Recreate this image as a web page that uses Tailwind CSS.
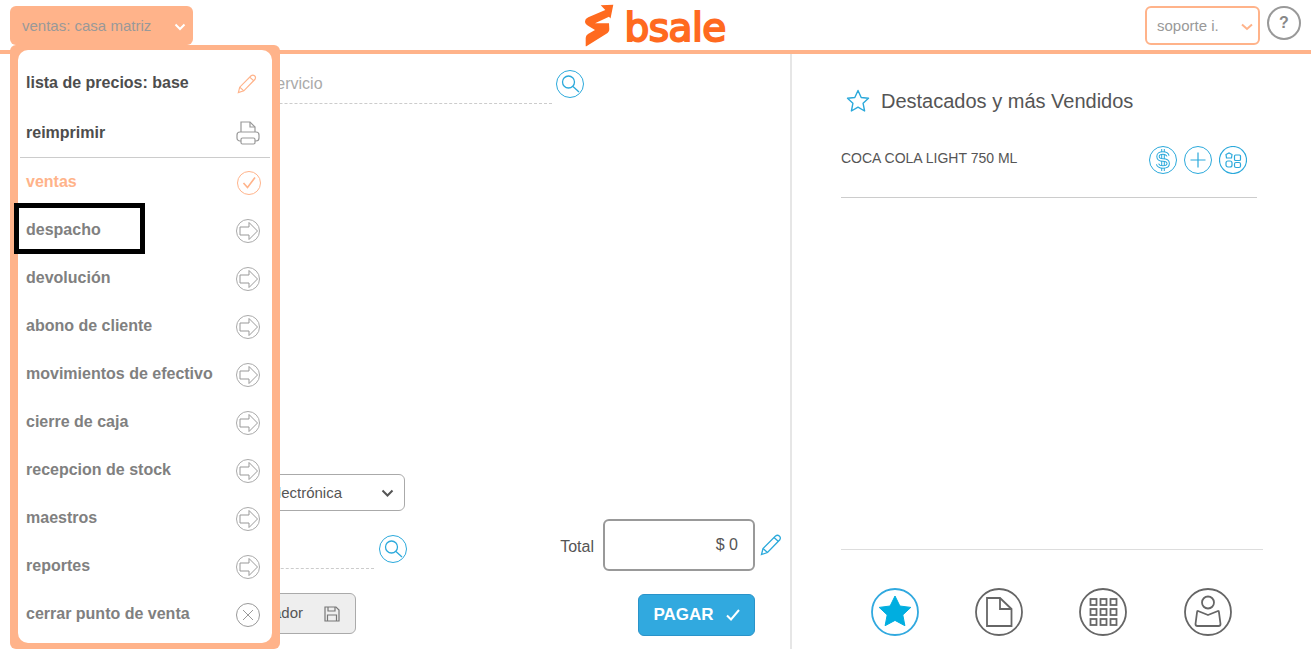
<!DOCTYPE html>
<html>
  <head>
    <meta charset="UTF-8" />
    <meta name="viewport" content="width=device-width, initial-scale=1.0" />
    <script src="https://cdn.jsdelivr.net/npm/@tailwindcss/browser@4"></script>
  </head>
  <body class="font-['Liberation_Sans',Arial,sans-serif] bg-white overflow-hidden">
    <svg class="hidden">
      <symbol id="arrow" viewBox="0 0 24 24">
        <circle cx="12" cy="12" r="11.500" fill="none" stroke="#aaa" />
        <path d="M4 8h9V3.500l8.500 8.500-8.500 8.500V16H4z" fill="none" stroke="#999" />
      </symbol>
      <symbol id="search" viewBox="0 0 28 28">
        <circle cx="14" cy="14" r="13.500" fill="none" stroke="#2ba9db" />
        <circle cx="12.500" cy="12" r="6" fill="none" stroke="#2ba9db" stroke-width="1.300" />
        <path d="M17 16.500l6 5.500" stroke="#2ba9db" stroke-width="1.300" />
      </symbol>
    </svg>

    <div class="relative h-[649px] flex flex-col">
      <header class="h-[54px] border-b-4 border-[#ffb38a] grid grid-cols-3 shrink-0">
        <div class="pl-[10px] pt-[6px]">
          <div class="w-[183px] h-[39px] bg-[#ffb38a] rounded-md pl-[12px] pr-[6px] pt-[2px] flex items-center justify-between text-[15px] text-[#999]">
            <span>ventas: casa matriz</span>
            <svg class="w-[12px] h-[8px] mr-[1px]" viewBox="0 0 12 8"><path d="M1.500 1.500L6 6l4.500-4.500" fill="none" stroke="#fff" stroke-width="2" /></svg>
          </div>
        </div>
        <div class="flex justify-center">
          <div class="flex items-start pt-[4px]">
            <svg class="w-[29px] h-[43px]" viewBox="0 0 29 43">
              <path d="M28.300.7L15.700 1.300 20.300 6 3.300 13.300Q0 15 0 17.300q0 3 3 4.400L10 26 3 30Q.7 31.500.7 34v8.300h.7L21 30q3.500-2 3.300-5l-.3-5.700H10L24 12.700l1.500 1.800z" fill="#ff6a1f" />
            </svg>
            <span class="ml-[11px] w-[102px] mt-[1px] text-[39px] leading-[46px] tracking-[-.5px] font-['DejaVu_Sans',sans-serif] text-[#ff6a1f] [-webkit-text-stroke:2px_#ff6a1f]">bsale</span>
          </div>
        </div>
        <div class="flex justify-end pt-[6px] pr-[10px]">
          <div class="w-[115px] h-[39px] border-2 border-[#ffb38a] rounded-md pl-[10px] pr-[5px] pt-[2px] flex items-center justify-between text-[15px] text-[#999]">
            <span>soporte i.</span>
            <svg class="w-[12px] h-[8px]" viewBox="0 0 12 8"><path d="M1 1.500L6 6l5-4.500" fill="none" stroke="#ffb38a" stroke-width="2" /></svg>
          </div>
          <div class="ml-[7px] w-[34px] h-[34px] rounded-full border-2 border-[#999] flex items-center justify-center text-[16px] font-bold text-[#888]">?</div>
        </div>
      </header>

      <main class="flex flex-1 min-h-0">
        <section class="w-[792px] border-r-2 border-[#e6e6e6] pl-[40px] pr-[8px] flex flex-col shrink-0">
          <div class="flex items-start pt-[16px]">
            <input class="w-[512px] h-[34px] pl-[94px] pb-[6px] border-b border-dashed border-[#ccc] text-[16px] outline-none placeholder:text-[#aaa]" placeholder="Buscar producto o servicio" />
            <svg class="w-[28px] h-[28px] ml-[4px]"><use href="#search" /></svg>
          </div>

          <div class="mt-auto pb-[13px] flex justify-between items-end">
            <div class="mb-[2px]">
              <div class="w-[365px] h-[37px] border border-[#aaa] rounded-md pt-[2px] flex items-center justify-end pr-[10px] text-[15px] text-[#555]">
                <span>Boleta Electrónica</span>
                <svg class="w-[13px] h-[9px] ml-[39px]" viewBox="0 0 13 9"><path d="M1.500 1.500l5 5 5-5" fill="none" stroke="#555" stroke-width="2" /></svg>
              </div>
              <div class="mt-[24px] flex items-start">
                <input class="w-[334px] h-[34px] border-b border-dashed border-[#ccc] outline-none" />
                <svg class="w-[28px] h-[28px] ml-[5px]"><use href="#search" /></svg>
              </div>
              <button class="mt-[24px] w-[316px] h-[41px] bg-[#eee] border border-[#aaa] rounded-md flex items-center justify-end pr-[15px] text-[15px] text-[#555]">
                <span>Borrador</span>
                <svg class="w-[16px] h-[16px] ml-[21px]" viewBox="0 0 16 16" fill="none" stroke="#777" stroke-width="1.200"><path d="M1 1h11l3 3v11H1z" /><path d="M4 1v4h7V1M3.500 15V9h9v6" /></svg>
              </button>
            </div>
            <div class="flex flex-col items-end">
              <div class="flex items-center">
                <span class="mt-[4px] text-[16px] text-[#555]">Total</span>
                <div class="ml-[9px] w-[152px] h-[52px] border-2 border-[#999] rounded-md flex items-center justify-end pr-[15px] text-[16px] text-[#555]">$ 0</div>
                <svg class="w-[22px] h-[22px] ml-[5px]" viewBox="0 0 22 22" fill="none" stroke="#2ba9db" stroke-width="1.300"><path d="M1.500 20.500l1.500-6L15.500 2q2-1.500 3.800 0t.5 3.800L7.500 18.500z" /><path d="M3 14.500l4.500 4M14 3.500l4.500 4" /></svg>
              </div>
              <button class="mt-[23px] mr-[27px] w-[117px] h-[42px] bg-[#31a9df] border border-[#2a93c9] rounded-md flex items-center justify-center text-[17px] font-bold text-white">
                PAGAR
                <svg class="w-[14px] h-[12px] ml-[12px]" viewBox="0 0 14 12"><path d="M1 6.500l4 4L13 1" fill="none" stroke="#fff" stroke-width="2" /></svg>
              </button>
            </div>
          </div>
        </section>

        <aside class="flex-1 pl-[49px] flex flex-col min-w-0">
          <div class="pt-[35px] pl-[5px] flex items-center">
            <svg class="w-[24px] h-[24px]" viewBox="0 0 24 24"><path d="M12 1.500l3.200 7 7.300.8-5.400 5 1.500 7.700L12 18.200 5.400 22l1.500-7.700-5.400-5 7.300-.8z" fill="none" stroke="#2ba9db" stroke-width="1.400" stroke-linejoin="round" /></svg>
            <h2 class="ml-[11px] text-[20px] leading-[24px] text-[#555]">Destacados y más Vendidos</h2>
          </div>
          <div class="mt-[33px] w-[406px] h-[28px] flex justify-between">
            <span class="text-[14px] leading-[24px] text-[#555]">COCA COLA LIGHT 750 ML</span>
            <div class="flex gap-[7px]">
              <svg class="w-[28px] h-[28px]" viewBox="0 0 28 28" fill="none"><circle cx="14" cy="14" r="13.500" stroke="#2ba9db" /><path d="M14 3v22" stroke="#2ba9db" stroke-width="3.600" /><path d="M14 3v22" stroke="#fff" stroke-width="1.600" /><path d="M19 10Q18 7 14 7q-5 0-5 3.500T14 14t5.200 3.500q0 3.500-5.200 3.500-4.500 0-5.500-3" stroke="#2ba9db" stroke-width="3.400" /><path d="M19 10Q18 7 14 7q-5 0-5 3.500T14 14t5.200 3.500q0 3.500-5.200 3.500-4.500 0-5.500-3" stroke="#fff" stroke-width="1.400" /></svg>
              <svg class="w-[28px] h-[28px]" viewBox="0 0 28 28" fill="none" stroke="#2ba9db"><circle cx="14" cy="14" r="13.500" /><path d="M14 6.500v15M6.500 14h15" stroke-width="1.200" /></svg>
              <svg class="w-[28px] h-[28px]" viewBox="0 0 28 28" fill="none" stroke="#2ba9db" stroke-width="1.200"><circle cx="14" cy="14" r="13.500" /><path d="M7 8.500l3-1.500 3 1.500-.5 3.500h-5z" /><rect x="15.500" y="9" width="6" height="5.500" rx="1" /><rect x="7" y="15" width="6" height="6" rx="2" /><rect x="15.500" y="16.500" width="6" height="5" rx="1.500" /></svg>
            </div>
          </div>
          <div class="mt-[23px] w-[416px] border-t border-[#ccc]"></div>

          <div class="mt-auto w-[422px] border-t border-[#ddd] pt-[38px] pb-[13px] pl-[30px] flex gap-[56px]">
            <svg class="w-[48px] h-[48px]" viewBox="0 0 48 48"><circle cx="24" cy="24" r="23" fill="none" stroke="#31a9df" stroke-width="1.800" /><path d="M24 8l4.900 10 10.900 1.400-8 7.500 2.100 10.800L24 32.400l-9.900 5.300 2.100-10.800-8-7.500L19.100 18z" fill="#00aee0" stroke="#00aee0" stroke-linejoin="round" /></svg>
            <svg class="w-[48px] h-[48px]" viewBox="0 0 48 48" fill="none" stroke="#666" stroke-width="1.800"><circle cx="24" cy="24" r="23" /><path d="M12 10h13l11.500 11V38H12z" /><path d="M25 10v11h11.500" /></svg>
            <svg class="w-[48px] h-[48px]" viewBox="0 0 48 48" fill="none" stroke="#666" stroke-width="1.800"><circle cx="24" cy="24" r="23" /><rect x="11.500" y="11" width="6" height="6" /><rect x="21.500" y="11" width="6" height="6" /><rect x="31.500" y="11" width="6" height="6" /><rect x="11.500" y="21" width="6" height="6" /><rect x="21.500" y="21" width="6" height="6" /><rect x="31.500" y="21" width="6" height="6" /><rect x="11.500" y="31" width="6" height="6" /><rect x="21.500" y="31" width="6" height="6" /><rect x="31.500" y="31" width="6" height="6" /></svg>
            <svg class="w-[48px] h-[48px] ml-[1px]" viewBox="0 0 48 48" fill="none" stroke="#666" stroke-width="1.800"><circle cx="24" cy="24" r="23" /><circle cx="24" cy="14.500" r="6" /><path d="M14 23q-1 0-1 1.500l-1.500 11.500q0 2 2 2h21q2 0 2-2L35 24.500Q35 23 34 23l-10 4z" stroke-linejoin="round" /></svg>
          </div>
        </aside>
      </main>

      <!-- menu desplegable sobre el contenido -->
      <nav class="absolute left-[10px] top-[45px] w-[270px] h-[604px] bg-[#ffb38a] rounded-md px-[8px] pt-[5px] pb-[6px]">
        <div class="h-full bg-white rounded-[10px] pt-[8px] text-[16px] font-bold text-[#808080]">
          <div class="h-[50px] pl-[8px] pr-[12px] flex items-center justify-between text-[#4d4d4d]">
            <span>lista de precios: base</span>
            <svg class="w-[20px] h-[22px] mr-[3px] mt-[2px]" viewBox="0 0 22 22" fill="none" stroke="#ffb38a" stroke-width="1.300"><path d="M1.500 20.500l1.500-6L15.500 2q2-1.500 3.800 0t.5 3.800L7.500 18.500z" /><path d="M3 14.500l4.500 4M14 3.500l4.500 4" /></svg>
          </div>
          <div class="h-[49px] pl-[8px] pr-[12px] flex items-center justify-between text-[#4d4d4d]">
            <span>reimprimir</span>
            <svg class="w-[24px] h-[24px]" viewBox="0 0 24 24" fill="none" stroke="#999" stroke-width="1.200"><path d="M5 11V1h9l5 5v5" /><path d="M14 1v5h5" /><rect x="1" y="11" width="22" height="9" rx="3" /><rect x="5" y="17" width="14" height="6" rx="1.500" fill="#fff" /></svg>
          </div>
          <div class="mx-[2px] border-t border-[#ccc]"></div>
          <div class="h-[48px] pl-[8px] pr-[12px] flex items-center justify-between text-[#ffb38a]">
            <span>ventas</span>
            <svg class="w-[24px] h-[24px] mt-[2px] -mr-[1px]" viewBox="0 0 24 24" fill="none" stroke="#ffb38a"><circle cx="12" cy="12" r="11.500" /><path d="M6.500 12l4 4.500L18 6.500" stroke-width="1.600" /></svg>
          </div>
          <div class="h-[48px] pl-[8px] pr-[12px] flex items-center justify-between"><span>despacho</span><svg class="w-[24px] h-[24px] mt-[2px]"><use href="#arrow" /></svg></div>
          <div class="h-[48px] pl-[8px] pr-[12px] flex items-center justify-between"><span>devolución</span><svg class="w-[24px] h-[24px] mt-[2px]"><use href="#arrow" /></svg></div>
          <div class="h-[48px] pl-[8px] pr-[12px] flex items-center justify-between"><span>abono de cliente</span><svg class="w-[24px] h-[24px] mt-[2px]"><use href="#arrow" /></svg></div>
          <div class="h-[48px] pl-[8px] pr-[12px] flex items-center justify-between"><span>movimientos de efectivo</span><svg class="w-[24px] h-[24px] mt-[2px]"><use href="#arrow" /></svg></div>
          <div class="h-[48px] pl-[8px] pr-[12px] flex items-center justify-between"><span>cierre de caja</span><svg class="w-[24px] h-[24px] mt-[2px]"><use href="#arrow" /></svg></div>
          <div class="h-[48px] pl-[8px] pr-[12px] flex items-center justify-between"><span>recepcion de stock</span><svg class="w-[24px] h-[24px] mt-[2px]"><use href="#arrow" /></svg></div>
          <div class="h-[48px] pl-[8px] pr-[12px] flex items-center justify-between"><span>maestros</span><svg class="w-[24px] h-[24px] mt-[2px]"><use href="#arrow" /></svg></div>
          <div class="h-[48px] pl-[8px] pr-[12px] flex items-center justify-between"><span>reportes</span><svg class="w-[24px] h-[24px] mt-[2px]"><use href="#arrow" /></svg></div>
          <div class="h-[48px] pl-[8px] pr-[12px] flex items-center justify-between">
            <span>cerrar punto de venta</span>
            <svg class="w-[24px] h-[24px] mt-[2px]" viewBox="0 0 24 24" fill="none" stroke="#999"><circle cx="12" cy="12" r="11.500" /><path d="M7 7l10 10M17 7L7 17" /></svg>
          </div>
        </div>
      </nav>

      <!-- recuadro de anotacion -->
      <div class="absolute left-[14px] top-[203px] w-[131px] h-[51px] border-[5px] border-black"></div>
    </div>
  </body>
</html>
